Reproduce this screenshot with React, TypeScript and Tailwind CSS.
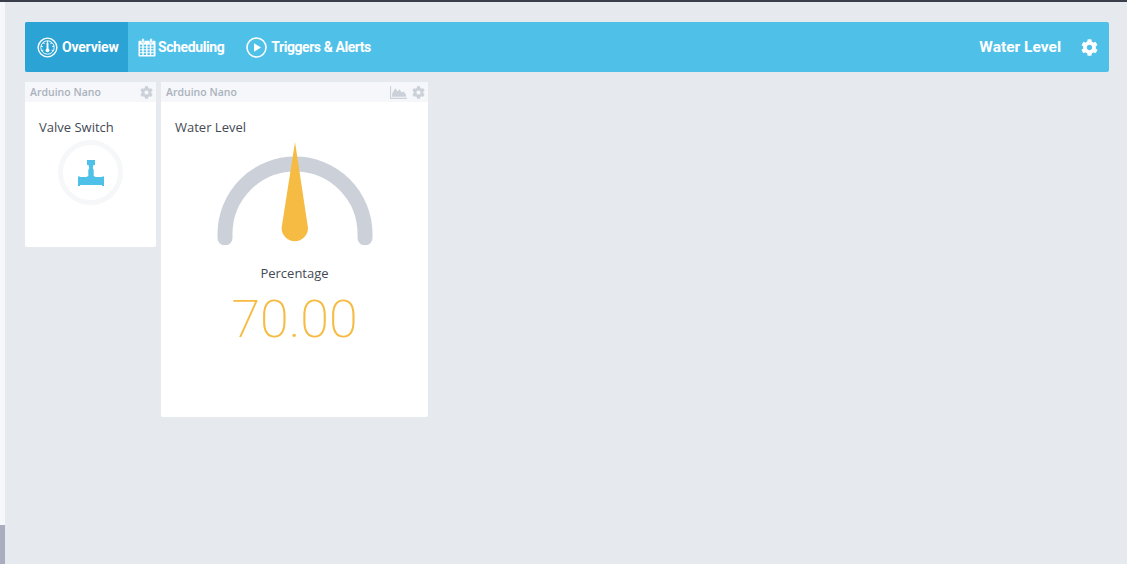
import { FaCog } from "react-icons/fa";

const font = { fontFamily: '"Open Sans", "Liberation Sans", sans-serif' };
const navFont = { fontFamily: 'Roboto, "Liberation Sans", sans-serif' };

function GaugeIcon() {
  const ticks = [-120, -80, -40, 0, 40, 80, 120];
  return (
    <svg width="21" height="21" viewBox="0 0 22 22" fill="none" stroke="white">
      <circle cx="11" cy="11" r="9.8" strokeWidth="1.5" />
      <circle cx="11" cy="11" r="7" strokeWidth="1" />
      {ticks.map((a) => (
        <line key={a} x1="11" y1="4" x2="11" y2="6" strokeWidth="1" transform={`rotate(${a} 11 11)`} />
      ))}
      <rect x="10" y="6" width="2" height="7" fill="white" stroke="none" />
      <circle cx="11" cy="14" r="2" fill="white" stroke="none" />
    </svg>
  );
}

function CalendarIcon() {
  const xs = [3.5, 7.5, 11.5, 15.5];
  return (
    <svg width="18" height="19" viewBox="0 0 19 20" fill="white">
      <path d="M1.5 3h16a1 1 0 0 1 1 1v14.5a1 1 0 0 1-1 1h-16a1 1 0 0 1-1-1V4a1 1 0 0 1 1-1z" />
      <rect x="4" y="0.5" width="2.5" height="5" rx="1" stroke="#4fc1e9" strokeWidth="0.5" />
      <rect x="12.5" y="0.5" width="2.5" height="5" rx="1" stroke="#4fc1e9" strokeWidth="0.5" />
      {[7, 10, 13, 16].map((y) =>
        xs.map((x) => <rect key={`${x}-${y}`} x={x - 1.5} y={y} width="2.5" height="2" fill="#4fc1e9" />)
      )}
    </svg>
  );
}

function PlayIcon() {
  return (
    <svg width="21" height="21" viewBox="0 0 21 21" fill="none">
      <circle cx="10.5" cy="10.5" r="9.5" stroke="white" strokeWidth="1.6" />
      <path d="M8 6.2 L15 10.5 L8 14.8 Z" fill="white" />
    </svg>
  );
}

function AreaIcon() {
  return (
    <svg width="17" height="13" viewBox="0 0 16 12" fill="#ccd1d9">
      <path d="M0 0h1v11h15v1H0z" />
      <path d="M2 10 L2 7 L5 2 L7 5 L9 3 L11 6 L13 5 L15 8 L15 10 Z" />
    </svg>
  );
}

function ValveIcon() {
  return (
    <svg width="26" height="26" viewBox="0 0 26 26" fill="#4fc1e9">
      <rect x="9" y="0" width="8" height="5" />
      <path d="M10.5 5h5l-.7 3 .9 2v6l2 1H8.3l2-1v-6l.9-2z" />
      <rect x="1.5" y="17" width="23" height="8" />
      <rect x="0" y="16.5" width="2" height="9.5" />
      <rect x="24" y="16.5" width="2" height="9.5" />
    </svg>
  );
}

function CardHead({ chart }: { chart?: boolean }) {
  return (
    <div className="flex h-5 items-center bg-[#f5f7fa] pl-[5px] pr-[3px] text-[10.5px] font-semibold text-[#aab2bd]">
      <span className="flex-1 pt-[1px]">Arduino Nano</span>
      {chart && (
        <span className="mr-[5px] flex">
          <AreaIcon />
        </span>
      )}
      <FaCog className="h-[13px] w-[13px] text-[#ccd1d9]" />
    </div>
  );
}

export default function App() {
  return (
    <div className="flex h-[564px] w-[1127px] flex-col overflow-hidden bg-[#e6e9ed]" style={font}>
      <div className="h-[2px] bg-[#3a3f4a]" />
      <div className="flex flex-1">
        <div className="flex w-[5px] flex-col bg-[#f5f7fa]">
          <div className="flex-1" />
          <div className="h-[39px] bg-[#a9adbd]" />
        </div>
        <main className="flex flex-1 flex-col gap-[10px] pl-5 pr-[18px] pt-5">
          <header className="flex h-[50px] items-center rounded-[2px] bg-[#4fc1e9] text-white" style={navFont}>
            <div className="flex h-full w-[103px] items-center gap-[4px] rounded-l-[2px] bg-[#2ba3d5] pl-[12px]">
              <GaugeIcon />
              <span className="text-[14px] font-bold tracking-[-0.2px]">Overview</span>
            </div>
            <div className="ml-[10px] flex items-center gap-[2px]">
              <CalendarIcon />
              <span className="text-[14px] font-bold tracking-[-0.4px]">Scheduling</span>
            </div>
            <div className="ml-[22px] flex items-center gap-[4px]">
              <PlayIcon />
              <span className="text-[14px] font-bold tracking-[-0.45px]">Triggers &amp; Alerts</span>
            </div>
            <span className="ml-auto pt-[2px] text-[15.5px] font-bold">Water Level</span>
            <FaCog className="ml-[20px] mr-[11px] h-[17px] w-[17px]" />
          </header>
          <div className="flex items-start gap-[5px]">
            <section className="flex h-[165px] w-[131px] flex-col rounded-[2px] bg-white">
              <CardHead />
              <div className="pl-[14px] pt-[15px] text-[13px] leading-5 text-[#434a54]">Valve Switch</div>
              <div className="ml-[33px] mt-[3px] flex h-[65px] w-[65px] items-center justify-center rounded-full border-[5px] border-[#f6f7f9] bg-white">
                <span className="flex">
                  <ValveIcon />
                </span>
              </div>
            </section>
            <section className="flex h-[335px] w-[267px] flex-col rounded-[2px] bg-white">
              <CardHead chart />
              <div className="pl-[14px] pt-[15px] text-[13px] leading-5 text-[#434a54]">Water Level</div>
              <svg className="ml-[50px] mt-[4px]" width="166" height="104" viewBox="0 0 166 104">
                <path d="M14 97 V93 A70 70 0 0 1 154 93 V97" fill="none" stroke="#ccd1d9" strokeWidth="15" strokeLinecap="round" />
                <path d="M84 1 L97 87 A13.2 13.2 0 1 1 70.6 87 Z" fill="#f6bb42" />
              </svg>
              <div className="mt-[18px] text-center text-[13px] leading-5 text-[#434a54]">Percentage</div>
              <div className="mt-[7px] text-center text-[52px] font-extralight leading-[60px] text-[#f6bb42]" style={navFont}>70.00</div>
            </section>
          </div>
        </main>
      </div>
    </div>
  );
}
